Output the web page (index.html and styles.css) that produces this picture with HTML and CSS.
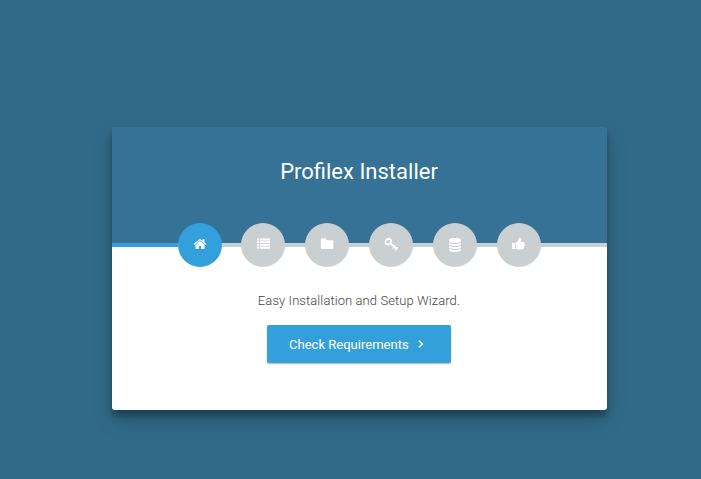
FILE: index.html
```html
<!DOCTYPE html>
<html lang="en">
<head>
<meta charset="utf-8">
<title>Profilex Installer</title>
<link rel="stylesheet" href="styles.css">
</head>
<body>
<main class="card">
  <header class="header"><h1 class="title">Profilex Installer</h1></header>
  <div class="steps">
    <span class="line line-active"></span>
    <span class="step active"><svg class="icon" viewBox="0 0 1792 1792"><path d="M1472 992v480q0 26-19 45t-45 19h-384v-384h-256v384h-384q-26 0-45-19t-19-45v-480q0-1 .5-3t.5-3l575-474 575 474q1 2 1 6zm223-69l-62 74q-8 9-21 11h-3q-13 0-21-7l-692-577-692 577q-12 8-24 7-13-2-21-11l-62-74q-8-10-7-23.5t11-21.5l719-599q32-26 76-26t76 26l244 204v-195q0-14 9-23t23-9h192q14 0 23 9t9 23v408l219 182q10 8 11 21.5t-7 23.5z"/></svg></span>
    <span class="line between first"></span>
    <span class="step"><svg class="icon" viewBox="0 0 14 14"><path d="M1 1.4h2v2H1zM3.8 1.4H14v2H3.8zM1 4.2h2v2H1zM3.8 4.2H14v2H3.8zM1 7h2v2H1zM3.8 7H14v2H3.8zM1 9.8h2v2H1zM3.8 9.8H14v2H3.8z"/></svg></span>
    <span class="line between"></span>
    <span class="step"><svg class="icon" viewBox="0 0 14 14"><path d="M.8 2.5q0-1 1-1h3.4q1 0 1 1v.7h6.2q1 0 1 1v6.9q0 1-1 1H1.8q-1 0-1-1z"/></svg></span>
    <span class="line between"></span>
    <span class="step"><svg class="icon" viewBox="0 0 14 14"><g class="key"><ellipse cx="4.2" cy="4.7" rx="3.1" ry="2.5" transform="rotate(-40 4.2 4.7)"/><path d="M6.2 6.3l6.6 5.3M9 11.5l2-2.9M11.3 13.2l2.2-3"/></g></svg></span>
    <span class="line between"></span>
    <span class="step"><svg class="icon icon-database" viewBox="0 0 1792 1792"><path d="M896 768q237 0 443-43t325-127v170q0 69-103 128t-280 93.5-385 34.5-385-34.5-280-93.5-103-128v-170q119 84 325 127t443 43zm0 768q237 0 443-43t325-127v170q0 69-103 128t-280 93.5-385 34.5-385-34.5-280-93.5-103-128v-170q119 84 325 127t443 43zm0-384q237 0 443-43t325-127v170q0 69-103 128t-280 93.5-385 34.5-385-34.5-280-93.5-103-128v-170q119 84 325 127t443 43zm0-1152q208 0 385 34.5t280 93.5 103 128v128q0 69-103 128t-280 93.5-385 34.5-385-34.5-280-93.5-103-128v-128q0-69 103-128t280-93.5 385-34.5z"/></svg></span>
    <span class="line between"></span>
    <span class="step"><svg class="icon" viewBox="0 0 14 14"><path d="M.1 6.1h3v6H.1zM3.8 6.1l2.6-2.7.6-2.2Q7.4.2 8.6.8q1.4.9.2 3.3l-.3.8h3q1.6.2 1.2 1.7.5.8-.1 1.7.2 1-.5 1.7 0 2.6-2.2 2.6H8q-1.5-.1-2.5-.6l-1.7-.1z"/></svg></span>
    <span class="line"></span>
  </div>
  <section class="content">
    <p class="lead">Easy Installation and Setup Wizard.</p>
    <a class="button">Check Requirements<svg class="chevron" viewBox="0 0 6 8"><path d="M1 .8L4.3 4 1 7.2"/></svg></a>
  </section>
</main>
</body>
</html>
```
FILE: styles.css
```css
* { box-sizing: border-box; }
body {
  margin: 0;
  min-height: 479px;
  padding: 127px 94px 0 112px;
  background: #316a88;
  font-family: Roboto, sans-serif;
}
.card {
  height: 283px;
  background: linear-gradient(#357295 116px, #fff 116px);
  border-radius: 3px;
  box-shadow: 0 10px 20px rgba(0, 0, 0, .19), 0 6px 6px rgba(0, 0, 0, .28);
}
.header {
  height: 116px;
  padding: 31px 1px 0 0;
}
.title {
  margin: 0;
  color: #fff;
  font-size: 22px;
  line-height: 27px;
  font-weight: 400;
  text-align: center;
}
.steps {
  display: flex;
  align-items: center;
  height: 44px;
  margin-top: -20px;
}
.line { flex: 1; height: 4px; background: #cacfd2; }
.line-active { flex: 0 0 66px; background: #34a0db; }
.between { flex: 0 0 20px; }
.first { flex-basis: 19px; }
.step {
  display: flex;
  align-items: center;
  justify-content: center;
  flex: 0 0 44px;
  height: 44px;
  border-radius: 50%;
  background: #cacfd2;
}
.active { background: #34a0db; }
.icon { width: 14px; height: 14px; margin-bottom: 2px; fill: #fff; }
.icon-database { margin-bottom: 1px; }
.key { fill: none; stroke: #fff; stroke-width: 1.8; }
.content { padding-right: 1px; text-align: center; }
.lead {
  margin: 0;
  padding: 23px 0 14px;
  color: #444;
  font-size: 13px;
  line-height: 21px;
  font-weight: 300;
  letter-spacing: .085px;
}
.button {
  display: inline-flex;
  align-items: center;
  width: 184px;
  height: 38px;
  padding-left: 22px;
  border-radius: 2px;
  background: #34a0db;
  color: #fff;
  font-size: 13px;
  letter-spacing: .02px;
  box-shadow: 0 1px 1.5px rgba(0, 0, 0, .3);
}
.chevron {
  width: 6px;
  height: 8px;
  margin-left: 9px;
  fill: none;
  stroke: #fff;
  stroke-width: 1.6;
}
```
